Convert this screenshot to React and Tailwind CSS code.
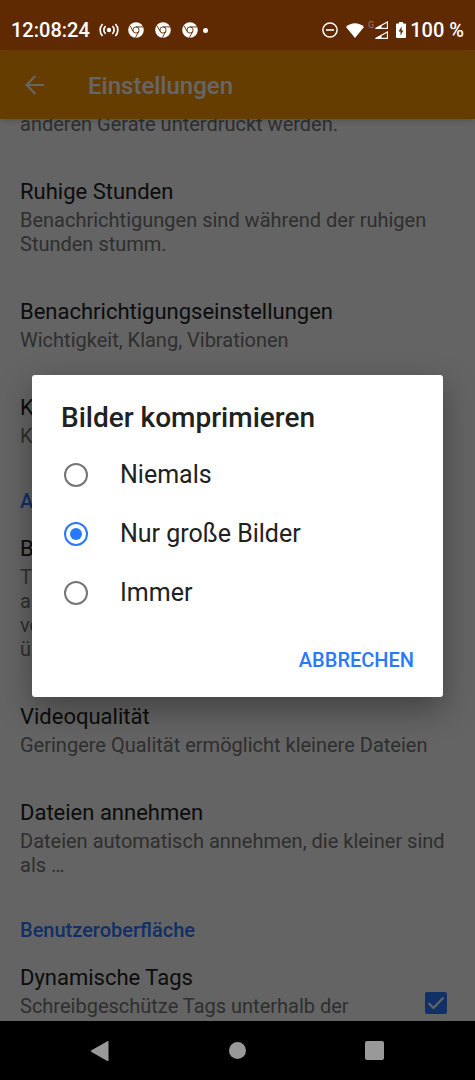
import React, { useState } from "react";

const sections = [
  {
    items: [
      {
        title: "Ruhige Stunden",
        summary: "Benachrichtigungen sind während der ruhigen Stunden stumm.",
      },
      {
        title: "Benachrichtigungseinstellungen",
        summary: "Wichtigkeit, Klang, Vibrationen",
      },
      { title: "Karenzzeit", summary: "Kurze Zeit keine Benachrichtigungen" },
    ],
  },
  {
    header: "Anhänge",
    items: [
      {
        title: "Bilder komprimieren",
        summary:
          "Tipp: Benutze „Datei auswählen“ statt „Bild\nauswählen“, um einzelne Bilder in\nvoller Größe und unkomprimiert zu\nübertragen",
      },
      {
        title: "Videoqualität",
        summary: "Geringere Qualität ermöglicht kleinere Dateien",
      },
      {
        title: "Dateien annehmen",
        summary: "Dateien automatisch annehmen, die kleiner sind als …",
      },
    ],
  },
  {
    header: "Benutzeroberfläche",
    items: [
      {
        title: "Dynamische Tags",
        summary: "Schreibgeschütze Tags unterhalb der Kontakte anzeigen",
        checkbox: true,
      },
    ],
  },
];

const options = ["Niemals", "Nur große Bilder", "Immer"];

function ChromeIcon() {
  return (
    <svg viewBox="0 0 16 16" className="size-4" aria-hidden="true">
      <circle cx="8" cy="8" r="7.8" fill="#fff" />
      <g fill="none" stroke="#5f2a02" strokeWidth="0.9">
        <circle cx="8" cy="8" r="3.1" />
        <path d="M8 4.9h7M5.3 9.6 2 3.8M10.7 9.6 7.4 15.6" />
      </g>
    </svg>
  );
}

function StatusBar() {
  return (
    <header className="flex h-[50px] shrink-0 items-center bg-[#5f2a02] pt-[10px] pr-[11px] pl-[11px] text-white">
      <span className="text-xl font-medium">12:08:24</span>
      <svg viewBox="0 0 20 14" className="ml-[9px] h-[14px] w-5" aria-hidden="true">
        <circle cx="10" cy="7" r="2.2" fill="#fff" />
        <path
          d="M6.6 3.2a5 5 0 0 0 0 7.6M13.4 3.2a5 5 0 0 1 0 7.6M3.6 1a8.6 8.6 0 0 0 0 12M16.4 1a8.6 8.6 0 0 1 0 12"
          fill="none"
          stroke="#fff"
          strokeWidth="1.7"
        />
      </svg>
      <div className="ml-[9px] flex items-center gap-[11px]">
        <ChromeIcon />
        <ChromeIcon />
        <ChromeIcon />
      </div>
      <span className="ml-[5px] size-[5px] rounded-full bg-white" />

      <svg viewBox="0 0 16 16" className="ml-auto size-4" aria-hidden="true">
        <circle cx="8" cy="8" r="7.1" fill="none" stroke="#fff" strokeWidth="1.5" />
        <path d="M4 8h8" stroke="#fff" strokeWidth="1.6" />
      </svg>
      <svg viewBox="0 0 18 15" className="ml-2 h-[15px] w-[18px]" aria-hidden="true">
        <path d="M9 15 0 4C5 -1 13 -1 18 4Z" fill="#fff" />
      </svg>
      <span className="ml-1 self-start pt-[11px] text-[9px] leading-none text-[#a07c64]">G</span>
      <svg viewBox="0 0 14 18" className="h-[18px] w-[14px]" aria-hidden="true">
        <path
          d="M1.500 7.400 13.400 1v6.400ZM1.500 17.400 13.400 11v6.400Z"
          fill="none"
          stroke="#fff"
          strokeWidth="1.1"
        />
        <path d="M1 8 7.500 4.200V8ZM1 18l6.500-3.800V18Z" fill="#fff" />
      </svg>
      <svg viewBox="0 0 10 16" className="mr-1 ml-2 h-4 w-[10px]" aria-hidden="true">
        <path d="M3 0h4v1.600h2a1 1 0 0 1 1 1V15a1 1 0 0 1-1 1H1a1 1 0 0 1-1-1V2.600a1 1 0 0 1 1-1h2Z" fill="#fff" />
        <path d="M5.600 4.500 2.600 9.500h1.900v4L7.400 8.500H5.600Z" fill="#5f2a02" />
      </svg>
      <span className="text-xl font-medium">100 %</span>
    </header>
  );
}

function Toolbar() {
  return (
    <div className="z-10 flex h-[69px] shrink-0 items-center bg-[#ff9800] pl-[25px] text-white shadow-md">
      <button type="button" aria-label="Zurück">
        <svg viewBox="0 0 20 20" className="size-5" fill="none" stroke="currentColor" strokeWidth="2.2">
          <path d="M19 10H2M10.300 1 1.600 10l8.700 9" />
        </svg>
      </button>
      <h1 className="ml-[43px] pt-0.5 text-2xl font-medium">Einstellungen</h1>
    </div>
  );
}

function Preference({ item }) {
  const [checked, setChecked] = useState(true);
  const id = item.title.replace(" ", "-");

  return (
    <li className="flex items-center pt-5 pr-5 pb-[21px] pl-5">
      <div className="flex-1">
        <label htmlFor={item.checkbox ? id : undefined} className="block text-[22px] leading-[29px] text-[#212121]">
          {item.title}
        </label>
        <p className="mt-0.5 text-xl leading-6 whitespace-pre-line text-[#757575]">{item.summary}</p>
      </div>
      {item.checkbox && (
        <div className="relative mr-2 ml-12 size-[22px]">
          <input
            id={id}
            type="checkbox"
            checked={checked}
            onChange={(e) => setChecked(e.target.checked)}
            className="block size-[22px] appearance-none rounded-xs border-2 border-[#757575] checked:border-[#2979ff] checked:bg-[#2979ff]"
          />
          {checked && (
            <svg
              viewBox="0 0 22 22"
              className="pointer-events-none absolute inset-0 size-[22px]"
              fill="none"
              stroke="#fafafa"
              strokeWidth="2.2"
            >
              <path d="m3.500 11 5 5L18.500 5.500" />
            </svg>
          )}
        </div>
      )}
    </li>
  );
}

function CompressionDialog() {
  const [selected, setSelected] = useState("Nur große Bilder");

  return (
    <div
      role="dialog"
      aria-labelledby="dialog-title"
      className="w-full rounded-[3px] bg-white shadow-[0_12px_32px_rgba(0,0,0,0.35)]"
    >
      <h2 id="dialog-title" className="px-[29px] pt-[26px] pb-[11px] text-[28px] leading-[34px] font-medium text-[#212121]">
        Bilder komprimieren
      </h2>
      {options.map((option) => (
        <label key={option} className="flex h-[59px] items-center gap-8 px-8 text-[25px] text-[#212121]">
          <input
            type="radio"
            name="compression"
            checked={selected === option}
            onChange={() => setSelected(option)}
            className="grid size-6 appearance-none place-items-center rounded-full border-2 border-[#757575] before:size-3 before:rounded-full checked:border-[#2979ff] checked:before:bg-[#2979ff]"
          />
          {option}
        </label>
      ))}
      <div className="flex justify-end px-[17px] pt-[13px] pb-3">
        <button type="button" className="h-[49px] px-3 text-xl font-medium text-[#2979ff]">
          ABBRECHEN
        </button>
      </div>
    </div>
  );
}

function NavigationBar() {
  return (
    <nav className="flex h-[59px] shrink-0 items-center justify-around bg-black px-8 text-[#999999]">
      <button type="button" aria-label="Zurück">
        <svg viewBox="0 0 20 20" className="size-5" fill="currentColor">
          <path d="M17.500 .3v19.400a1 1 0 0 1-1.200 .2L.5 11a1 1 0 0 1 0-1.800L16.300 .2a1 1 0 0 1 1.200 .1Z" />
        </svg>
      </button>
      <button type="button" aria-label="Startseite">
        <span className="block size-[17px] rounded-full bg-[#999999]" />
      </button>
      <button type="button" aria-label="Übersicht">
        <span className="block size-[19px] rounded-xs bg-[#999999]" />
      </button>
    </nav>
  );
}

export default function App() {
  return (
    <div className="flex h-screen flex-col overflow-hidden font-[Roboto,sans-serif]">
      <StatusBar />
      <div className="relative flex min-h-0 flex-1 flex-col">
        <Toolbar />
        <main className="min-h-0 flex-1 overflow-hidden bg-[#fafafa]">
          {/* List is scrolled, the first summary is cut by the toolbar */}
          <p className="-mt-[7px] px-5 pb-[21px] text-xl leading-6 text-[#757575]">anderen Geräte unterdrückt werden.</p>
          {sections.map((section, index) => (
            <section key={index}>
              {section.header && (
                <h2 className="px-5 pt-5 text-xl leading-[25px] font-medium text-[#2979ff]">{section.header}</h2>
              )}
              <ul>
                {section.items.map((item) => (
                  <Preference key={item.title} item={item} />
                ))}
              </ul>
            </section>
          ))}
        </main>

        {/* Dialog over the dimmed page */}
        <div className="absolute inset-0 z-20 flex items-center bg-black/60 px-8">
          <CompressionDialog />
        </div>
      </div>
      <NavigationBar />
    </div>
  );
}
